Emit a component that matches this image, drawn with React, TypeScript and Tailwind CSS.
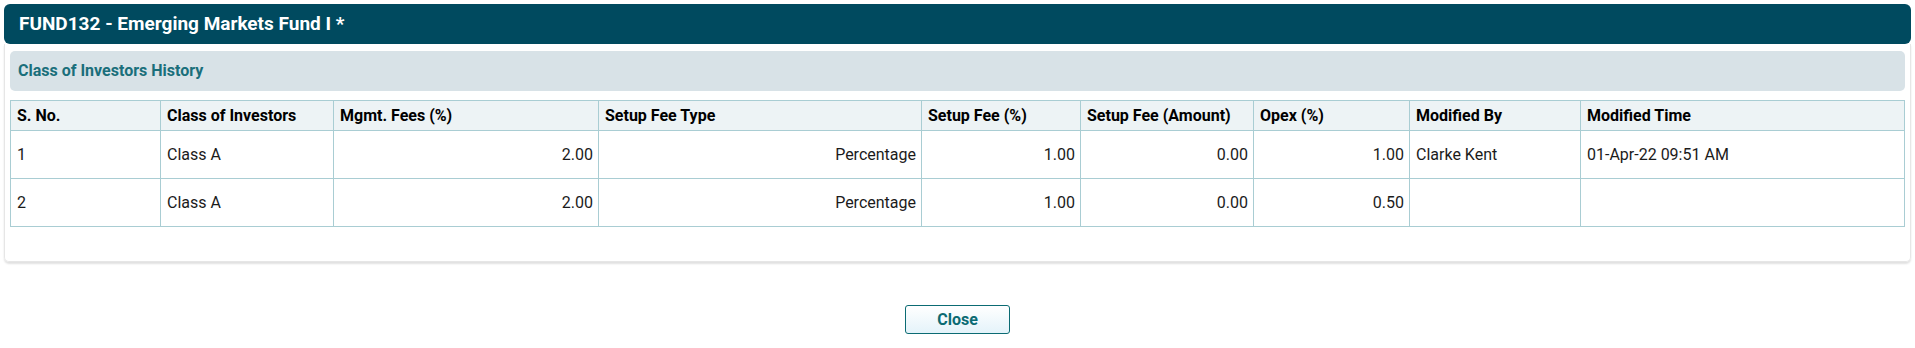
import React from 'react';

interface HistoryRow {
  sno: number;
  cls: string;
  mgmtFee: string;
  setupType: string;
  setupFee: string;
  setupAmount: string;
  opex: string;
  modifiedBy: string;
  modifiedTime: string;
}

const rows: HistoryRow[] = [
  {
    sno: 1,
    cls: 'Class A',
    mgmtFee: '2.00',
    setupType: 'Percentage',
    setupFee: '1.00',
    setupAmount: '0.00',
    opex: '1.00',
    modifiedBy: 'Clarke Kent',
    modifiedTime: '01-Apr-22 09:51 AM',
  },
  {
    sno: 2,
    cls: 'Class A',
    mgmtFee: '2.00',
    setupType: 'Percentage',
    setupFee: '1.00',
    setupAmount: '0.00',
    opex: '0.50',
    modifiedBy: '',
    modifiedTime: '',
  },
];

const App = () => {
  const th = 'border border-[#a9cdd3] text-left font-bold px-[6px] h-[30px] text-black';
  const td = 'border border-[#a9cdd3] px-[6px] h-[48px] text-[#1b1b1b]';
  const tdNum = 'border border-[#a9cdd3] pl-[6px] pr-[5px] h-[48px] text-right text-[#1b1b1b]';

  return (
    <div className="p-[4px] bg-white font-['Roboto',sans-serif]">
      <div className="h-[40px] bg-[#004a5f] rounded-[6px] flex items-center px-[15px]">
        <h1 className="text-white font-bold text-[19px]">FUND132 - Emerging Markets Fund I *</h1>
      </div>
      <div className="border border-t-0 border-[#e6e6e6] rounded-b-[5px] shadow-[0_2px_2px_rgba(0,0,0,0.12)] px-[5px] pt-[7px] pb-[34px]">
        <div className="h-[40px] bg-[#d8e2e7] rounded-[5px] flex items-center px-[8px]">
          <h2 className="text-[#1a6f7b] font-bold text-[16px]">Class of Investors History</h2>
        </div>
        <table className="mt-[9px] w-[1894px] table-fixed border-collapse text-[16px]">
          <colgroup>
            <col className="w-[150px]" />
            <col className="w-[173px]" />
            <col className="w-[265px]" />
            <col className="w-[323px]" />
            <col className="w-[159px]" />
            <col className="w-[173px]" />
            <col className="w-[156px]" />
            <col className="w-[171px]" />
            <col className="w-[324px]" />
          </colgroup>
          <thead>
            <tr className="bg-[#edf3f5]">
              <th className={th}>S. No.</th>
              <th className={th}>Class of Investors</th>
              <th className={th}>Mgmt. Fees (%)</th>
              <th className={th}>Setup Fee Type</th>
              <th className={th}>Setup Fee (%)</th>
              <th className={th}>Setup Fee (Amount)</th>
              <th className={th}>Opex (%)</th>
              <th className={th}>Modified By</th>
              <th className={th}>Modified Time</th>
            </tr>
          </thead>
          <tbody>
            {rows.map((row) => (
              <tr key={row.sno}>
                <td className={td}>{row.sno}</td>
                <td className={td}>{row.cls}</td>
                <td className={tdNum}>{row.mgmtFee}</td>
                <td className={tdNum}>{row.setupType}</td>
                <td className={tdNum}>{row.setupFee}</td>
                <td className={tdNum}>{row.setupAmount}</td>
                <td className={tdNum}>{row.opex}</td>
                <td className={td}>{row.modifiedBy}</td>
                <td className={td}>{row.modifiedTime}</td>
              </tr>
            ))}
          </tbody>
        </table>
      </div>
      <div className="flex justify-center pt-[43px]">
        <button className="w-[105px] h-[29px] border border-[#0b6b73] rounded-[3px] bg-gradient-to-b from-white to-[#e4f3fa] text-[#0b6b73] font-bold text-[16px]">
          Close
        </button>
      </div>
    </div>
  );
};

export default App;
